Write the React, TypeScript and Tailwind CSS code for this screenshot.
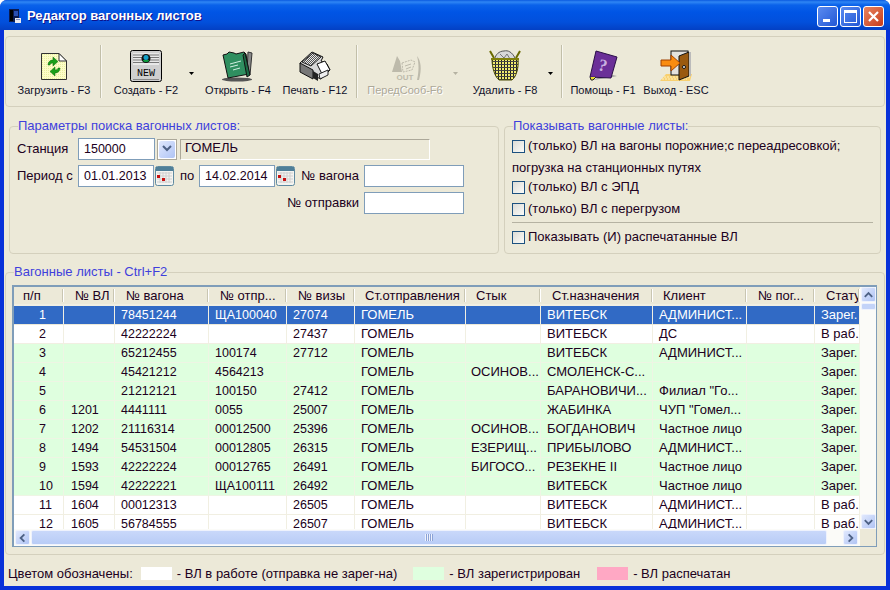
const colW = ['w-[50px]', 'w-[51px]', 'w-[94px]', 'w-[78px]', 'w-[68px]', 'w-[111px]', 'w-[75px]', 'w-[112px]', 'w-[94px]', 'w-[68px]', 'w-[45px]'];
const headers = ['п/п', '№ ВЛ', '№ вагона', '№ отпр...', '№ визы', 'Ст.отправления', 'Стык', 'Ст.назначения', 'Клиент', '№ пог...', 'Статус'];
const headerPad = ['pl-[9px]', 'pl-[11px]', 'pl-[11px]', 'pl-[11px]', 'pl-[11px]', 'pl-[10px]', 'pl-[10px]', 'pl-[11px]', 'pl-[10px]', 'pl-[11px]', 'pl-[11px]'];
const cellPad = ['pl-[25px]', 'pl-[7px]', 'pl-[6px]', 'pl-[6px]', 'pl-[6px]', 'pl-[6px]', 'pl-[5px]', 'pl-[6px]', 'pl-[6px]', 'pl-[6px]', 'pl-[6px]'];

const rows = [
  { kind: 'selected', cells: ['1', '', '78451244', 'ЩА100040', '27074', 'ГОМЕЛЬ', '', 'ВИТЕБСК', 'АДМИНИСТ...', '', 'Зарег.'] },
  { kind: 'white', cells: ['2', '', '42222224', '', '27437', 'ГОМЕЛЬ', '', 'ВИТЕБСК', 'ДС', '', 'В раб.'] },
  { kind: 'green', cells: ['3', '', '65212455', '100174', '27712', 'ГОМЕЛЬ', '', 'ВИТЕБСК', 'АДМИНИСТ...', '', 'Зарег.'] },
  { kind: 'green', cells: ['4', '', '45421212', '4564213', '', 'ГОМЕЛЬ', 'ОСИНОВ...', 'СМОЛЕНСК-С...', '', '', 'Зарег.'] },
  { kind: 'green', cells: ['5', '', '21212121', '100150', '27412', 'ГОМЕЛЬ', '', 'БАРАНОВИЧИ...', 'Филиал "Го...', '', 'Зарег.'] },
  { kind: 'green', cells: ['6', '1201', '4441111', '0055', '25007', 'ГОМЕЛЬ', '', 'ЖАБИНКА', 'ЧУП "Гомел...', '', 'Зарег.'] },
  { kind: 'green', cells: ['7', '1202', '21116314', '00012500', '25396', 'ГОМЕЛЬ', 'ОСИНОВ...', 'БОГДАНОВИЧ', 'Частное лицо', '', 'Зарег.'] },
  { kind: 'green', cells: ['8', '1494', '54531504', '00012805', '26315', 'ГОМЕЛЬ', 'ЕЗЕРИЩ...', 'ПРИБЫЛОВО', 'АДМИНИСТ...', '', 'Зарег.'] },
  { kind: 'green', cells: ['9', '1593', '42222224', '00012765', '26491', 'ГОМЕЛЬ', 'БИГОСО...', 'РЕЗЕКНЕ II', 'Частное лицо', '', 'Зарег.'] },
  { kind: 'green', cells: ['10', '1594', '42222221', 'ЩА100111', '26492', 'ГОМЕЛЬ', '', 'ВИТЕБСК', 'Частное лицо', '', 'Зарег.'] },
  { kind: 'white', cells: ['11', '1604', '00012313', '', '26505', 'ГОМЕЛЬ', '', 'ВИТЕБСК', 'АДМИНИСТ...', '', 'В раб.'] },
  { kind: 'white', cells: ['12', '1605', '56784555', '', '26507', 'ГОМЕЛЬ', '', 'ВИТЕБСК', 'АДМИНИСТ...', '', 'В раб.'] },
];

function AppIcon() {
  return (
    <svg width="16" height="16" viewBox="0 0 16 16">
      <rect x="2" y="1" width="10" height="13" fill="#0a1a50" />
      <rect x="3" y="2" width="3" height="11" fill="#000" />
      <rect x="7" y="3" width="4" height="5" fill="#2a4fb0" />
      <rect x="8" y="10" width="6" height="5" fill="#e8e8f0" />
      <rect x="9" y="11" width="4" height="1" fill="#8090c0" />
    </svg>
  );
}

function RefreshIcon() {
  return (
    <svg width="28" height="28" viewBox="0 0 28 28">
      <defs>
        <pattern id="dots" width="2" height="2" patternUnits="userSpaceOnUse">
          <rect width="2" height="2" fill="#fdfdc8" />
          <rect width="1" height="1" fill="#e8f0a0" />
        </pattern>
      </defs>
      <path d="M1.500 1.500H19L26.500 9V27.500H1.500Z" fill="url(#dots)" stroke="#333" />
      <path d="M19 1.500V9H26.500Z" fill="#fff" stroke="#333" />
      <path d="M8 13c0-3 2-5 5-5V5l5 4.500-5 4.500v-3c-2 0-3 1-3 2z" fill="#1aa01a" stroke="#0c6a0c" strokeWidth="0.500" />
      <path d="M20 16c0 3-2 5-5 5v3l-5-4.500 5-4.500v3c2 0 3-1 3-2z" fill="#1aa01a" stroke="#0c6a0c" strokeWidth="0.500" />
    </svg>
  );
}

function NewIcon() {
  return (
    <svg width="32" height="32" viewBox="0 0 32 32">
      <rect x="0.500" y="0.500" width="31" height="31" rx="2" fill="#cfcfcf" stroke="#000" />
      <rect x="3" y="3" width="26" height="12" fill="#e8e8e8" />
      <path d="M3 5h26M3 7.500h26M3 10h26M3 12.500h26" stroke="#777" />
      <circle cx="16" cy="8.500" r="4.500" fill="#111" />
      <circle cx="16" cy="7.500" r="2.500" fill="#12a0c8" />
      <path d="M13 10a3 2 0 0 0 6 0z" fill="#0c9a3c" />
      <text x="16" y="26" textAnchor="middle" fontSize="10" fontFamily="'Liberation Mono', monospace" fill="#000">NEW</text>
      <path d="M3 29.500h26" stroke="#888" />
    </svg>
  );
}

function OpenIcon() {
  return (
    <svg width="32" height="32" viewBox="0 0 32 32">
      <ellipse cx="15" cy="29.500" rx="15" ry="2" fill="#555" />
      <path d="M26 2l4 1-2 22-3-2z" fill="#888" stroke="#333" />
      <path d="M1 5l4-1 2-2 5 1 2 1 8-2 2 2 3 20-21 4z" fill="#2f8f60" stroke="#111" />
      <path d="M23 3l5 22-3 2-4-22z" fill="#1c6b45" stroke="#111" />
      <path d="M8 14l11-3M8 17l8-2M11 20l7-2" stroke="#cfeee0" />
    </svg>
  );
}

function PrinterIcon() {
  return (
    <svg width="32" height="32" viewBox="0 0 32 32">
      <defs>
        <pattern id="dither" width="2" height="2" patternUnits="userSpaceOnUse">
          <rect width="2" height="2" fill="#e8e8e8" />
          <rect width="1" height="1" fill="#555" />
          <rect x="1" y="1" width="1" height="1" fill="#555" />
        </pattern>
      </defs>
      <path d="M1 13L13 2l11 5-2 4 6 3 3 6-9 9-16-7z" fill="#d8d8d8" stroke="#111" />
      <path d="M3 12L14 3l8 4-10 9z" fill="url(#dither)" stroke="#222" />
      <path d="M1 13l13 7v9L1 22z" fill="#777" stroke="#111" />
      <path d="M18 14l8-3 5 9-8 4z" fill="#fff" stroke="#111" />
      <path d="M14 21l5 3v7l-5-3z" fill="#222" />
      <path d="M20 24l9-4v5l-8 4z" fill="#efefef" stroke="#222" />
    </svg>
  );
}

function OutIcon() {
  return (
    <svg width="34" height="32" viewBox="0 0 34 32">
      <path d="M4 22L9 6l3 5 2 11z" fill="#bdbaab" />
      <path d="M29 6c4 5 5 13 2 24l-2 0c2-9 2-16 0-24z" fill="#bdbaab" />
      <path d="M14 13l9-3 4 2-3 8-9 2z" fill="none" stroke="#bdbaab" strokeDasharray="2 1" />
      <path d="M17 16l6-2M18 19l5-2" stroke="#bdbaab" />
      <text x="17" y="30" textAnchor="middle" fontSize="8" fontWeight="700" fontFamily="'Liberation Sans', sans-serif" fill="#bdbaab">OUT</text>
    </svg>
  );
}

function BasketIcon() {
  return (
    <svg width="32" height="32" viewBox="0 0 32 32">
      <path d="M1 1l4 7M31 1l-4 7" stroke="#6b6b00" strokeWidth="2" />
      <path d="M6 9c0-4 4-8 9-8 4-1 8 1 11 7l-2 4H8z" fill="#d8d8d8" stroke="#555" />
      <path d="M11 4l4 4 3-4 3 5M8 8l5 2" stroke="#777" fill="none" />
      <defs>
        <pattern id="weave" width="3" height="3" patternUnits="userSpaceOnUse">
          <rect width="3" height="3" fill="#f2ec70" />
          <rect width="1" height="3" fill="#222" />
          <rect y="2" width="3" height="1" fill="#444" />
        </pattern>
      </defs>
      <path d="M3 9h26c1 9-2 18-6 21H10C6 27 3 18 3 9z" fill="url(#weave)" stroke="#4a4a00" />
      <path d="M2 9h28" stroke="#80800a" strokeWidth="2" />
    </svg>
  );
}

function HelpBookIcon() {
  return (
    <svg width="32" height="32" viewBox="0 0 32 32">
      <path d="M6 30l14-2 10-2-10-2z" fill="#999" />
      <path d="M9 1l21 6-6 21L3 27z" fill="#6b2f98" stroke="#2b0f48" />
      <path d="M3 27l1 3 2 0 3-3" fill="#e8d830" stroke="#222" />
      <text x="16" y="21" textAnchor="middle" fontSize="17" fontWeight="700" fontFamily="'Liberation Serif', serif" fill="#c9b0e0" transform="rotate(15 16 15)">?</text>
    </svg>
  );
}

function ExitIcon() {
  return (
    <svg width="32" height="32" viewBox="0 0 32 32">
      <path d="M0 31l6-7h26l-2 7z" fill="#f8d070" />
      <path d="M2 29h25M4 27h26" stroke="#fff2c0" strokeDasharray="2 1" />
      <rect x="11" y="1" width="17" height="24" fill="#e4e2de" stroke="#111" />
      <path d="M19 6l10-4v24l-10 4z" fill="#9a5a10" stroke="#111" />
      <circle cx="24" cy="17" r="1.500" fill="#fff" stroke="#111" />
      <path d="M1 10h10V5l9 8-9 8v-5H1z" fill="#fa8c10" stroke="#a04000" />
      <path d="M29 2h2v24h-2z" fill="#bbb" />
    </svg>
  );
}

function Caret({ disabled }: { disabled?: boolean }) {
  return (
    <svg width="5" height="3" viewBox="0 0 5 3" className="mt-[22px] shrink-0">
      <path d="M0 0h5L2.500 3z" fill={disabled ? '#b5b2a2' : '#000'} />
    </svg>
  );
}

function Sep() {
  return <div className="w-[2px] my-[8px] border-l border-[#c2bfa9] border-r border-r-[#f8f7f0] shrink-0" />;
}

function ToolButton({ icon, label, width, disabled }: { icon: React.ReactNode; label: string; width: string; disabled?: boolean }) {
  return (
    <div className={`${width} flex flex-col items-center shrink-0`}>
      <div className="h-[32px] mt-[13px] flex items-center justify-center">{icon}</div>
      <div className={`mt-[1px] text-[11px] leading-[14px] whitespace-nowrap ${disabled ? 'text-[#aca899] [text-shadow:1px_1px_0_#fff]' : 'text-[#10102a]'}`}>{label}</div>
    </div>
  );
}

function XpInput({ value, width }: { value?: string; width: string }) {
  return (
    <div className={`${width} h-[22px] bg-white border border-[#7f9db9] pl-[5px] text-[12.5px] leading-[20px] text-[#200020] shrink-0`}>{value}</div>
  );
}

function CalendarBtn() {
  return (
    <svg width="19" height="22" viewBox="0 0 19 22" className="shrink-0">
      <rect x="0.500" y="1.500" width="18" height="19" rx="2" fill="#f4f4f0" stroke="#5f8aa0" />
      <rect x="1" y="2" width="17" height="4" fill="#4f7f98" />
      <path d="M2 8h15M2 11h15M2 14h15M2 17h15M5 7v11M8 7v11M11 7v11M14 7v11" stroke="#d0d0d0" />
      <rect x="2" y="10" width="3" height="3" fill="#c81010" />
      <rect x="7" y="13" width="3" height="3" fill="#c81010" />
    </svg>
  );
}

function Check({ label }: { label: string }) {
  return (
    <div className="flex items-center h-[14px]">
      <div className="w-[13px] h-[13px] border border-[#1c5180] bg-gradient-to-br from-[#dcdcd7] to-[#fbfbf8] shrink-0" />
      <span className="ml-[3px] text-[13px] whitespace-nowrap text-[#200020]">{label}</span>
    </div>
  );
}

function ScrollBtn({ dir }: { dir: 'up' | 'down' | 'left' | 'right' }) {
  const d = { up: 'M3 9l4-4 4 4', down: 'M3 5l4 4 4-4', left: 'M9 3L5 7l4 4', right: 'M5 3l4 4-4 4' }[dir];
  return (
    <div className="w-[15px] h-[15px] rounded-[2px] border border-[#eef2fd] bg-gradient-to-br from-[#e0e8fd] to-[#b0c4f4] flex items-center justify-center shrink-0">
      <svg width="14" height="14" viewBox="0 0 14 14">
        <path d={d} fill="none" stroke="#4d6185" strokeWidth="2" />
      </svg>
    </div>
  );
}

export default function App() {
  return (
    <div className="w-[890px] h-[590px] overflow-hidden bg-white font-['Liberation_Sans',Arial,sans-serif]">
      <div className="w-full h-full flex flex-col rounded-t-[7px] overflow-hidden bg-[#0831d9]">
        <div className="h-[30px] shrink-0 flex items-center pt-[2px] bg-[linear-gradient(180deg,#0a5ae0_0,#2f86f4_2px,#0a62ea_5px,#0055e5_12px,#0250dc_22px,#0340c4_30px)] pl-[7px] pr-[6px]">
          <AppIcon />
          <span className="ml-[4px] text-[13px] font-bold text-white [text-shadow:1px_1px_0_#0f1089]">Редактор вагонных листов</span>
          <div className="ml-auto flex gap-[2px]">
            <div className="w-[21px] h-[21px] rounded-[3px] border border-white bg-gradient-to-br from-[#5b8bf0] to-[#2257d5] flex items-end pl-[5px] pb-[4px]">
              <div className="w-[7px] h-[3px] bg-white" />
            </div>
            <div className="w-[21px] h-[21px] rounded-[3px] border border-white bg-gradient-to-br from-[#5b8bf0] to-[#2257d5] flex items-center justify-center">
              <div className="w-[13px] h-[13px] border border-white border-t-[3px]" />
            </div>
            <div className="w-[21px] h-[21px] rounded-[3px] border border-white bg-gradient-to-br from-[#e8835f] to-[#c63a17] flex items-center justify-center">
              <svg width="13" height="13" viewBox="0 0 13 13">
                <path d="M2 2l9 9M11 2l-9 9" stroke="#fff" strokeWidth="2.200" />
              </svg>
            </div>
          </div>
        </div>

        <div className="flex-1 flex flex-col mx-[4px] mb-[4px] bg-[#ece9d8] min-h-0">
          <div className="h-[71px] mt-[6px] ml-[1px] mr-[1px] border border-[#d4d0bd] rounded-[4px] flex shrink-0 pl-[2px]">
            <ToolButton icon={<RefreshIcon />} label="Загрузить - F3" width="w-[92px]" />
            <Sep />
            <div className="w-[4px] shrink-0" />
            <ToolButton icon={<NewIcon />} label="Создать - F2" width="w-[80px]" />
            <div className="w-[10px] flex justify-center shrink-0"><div className="mt-[13px]"><Caret /></div></div>
            <ToolButton icon={<OpenIcon />} label="Открыть - F4" width="w-[84px]" />
            <ToolButton icon={<PrinterIcon />} label="Печать - F12" width="w-[70px]" />
            <div className="w-[6px] shrink-0" />
            <Sep />
            <ToolButton icon={<OutIcon />} label="ПередСооб-F6" width="w-[94px]" disabled />
            <div className="w-[6px] flex justify-center shrink-0"><div className="mt-[13px]"><Caret disabled /></div></div>
            <div className="w-[4px] shrink-0" />
            <ToolButton icon={<BasketIcon />} label="Удалить - F8" width="w-[86px]" />
            <div className="w-[5px] flex justify-center shrink-0"><div className="mt-[13px]"><Caret /></div></div>
            <div className="w-[8px] shrink-0" />
            <Sep />
            <ToolButton icon={<HelpBookIcon />} label="Помощь - F1" width="w-[80px]" />
            <ToolButton icon={<ExitIcon />} label="Выход - ESC" width="w-[66px]" />
          </div>

          <div className="flex mt-[12px] ml-[5px] gap-[5px] h-[135px] shrink-0">
            <fieldset className="w-[490px] border border-[#d4d0bd] rounded-[4px]">
              <legend className="ml-[8px] text-[13px] leading-[14px] text-[#3f3fdc]">Параметры поиска вагонных листов:</legend>
              <div className="pl-[7px] pt-[5px] flex flex-col gap-[5px] text-[13px] text-[#200020]">
                <div className="flex items-center h-[22px]">
                  <span className="w-[61px]">Станция</span>
                  <XpInput value="150000" width="w-[77px]" />
                  <div className="ml-[2px] w-[20px] h-[21px] border border-[#aca899] bg-white p-[1px]">
                    <div className="w-full h-full rounded-[2px] bg-gradient-to-br from-[#e0e8fd] to-[#b0c4f4] flex items-center justify-center">
                      <svg width="10" height="8" viewBox="0 0 10 8"><path d="M1 1l4 4 4-4" fill="none" stroke="#4d6185" strokeWidth="2" /></svg>
                    </div>
                  </div>
                  <div className="ml-[3px] w-[250px] h-[21px] border border-t-[#aca899] border-l-[#aca899] border-r-white border-b-white pl-[4px] leading-[15px]">ГОМЕЛЬ</div>
                </div>
                <div className="flex items-center h-[22px]">
                  <span className="w-[61px]">Период с</span>
                  <XpInput value="01.01.2013" width="w-[76px]" />
                  <div className="ml-[1px]"><CalendarBtn /></div>
                  <span className="ml-[6px] w-[19px]">по</span>
                  <XpInput value="14.02.2014" width="w-[76px]" />
                  <div className="ml-[1px]"><CalendarBtn /></div>
                  <span className="w-[64px] text-right whitespace-nowrap">№ вагона</span>
                  <div className="ml-[5px]"><XpInput width="w-[100px]" /></div>
                </div>
                <div className="flex items-center justify-end h-[22px] pr-[34px]">
                  <span>№ отправки</span>
                  <div className="ml-[5px]"><XpInput width="w-[100px]" /></div>
                </div>
              </div>
            </fieldset>

            <fieldset className="w-[377px] border border-[#d4d0bd] rounded-[4px]">
              <legend className="ml-[8px] text-[13px] leading-[14px] text-[#3f3fdc]">Показывать вагонные листы:</legend>
              <div className="px-[7px] pt-[6px] flex flex-col text-[13px] text-[#200020]">
                <Check label="(только) ВЛ на вагоны порожние;с переадресовкой;" />
                <div className="mt-[8px] h-[14px] leading-[14px]">погрузка на станционных путях</div>
                <div className="mt-[5px]"><Check label="(только) ВЛ с ЭПД" /></div>
                <div className="mt-[8px]"><Check label="(только) ВЛ с перегрузом" /></div>
                <div className="mt-[6px] h-[1px] bg-[#b5b2a2]" />
                <div className="mt-[7px]"><Check label="Показывать (И) распечатанные ВЛ" /></div>
              </div>
            </fieldset>
          </div>

          <fieldset className="mt-[11px] ml-[1px] mr-[1px] h-[290px] shrink-0 border border-[#d4d0bd] rounded-[4px]">
            <legend className="ml-[8px] text-[13px] leading-[14px] text-[#3f3fdc]">Вагонные листы - Ctrl+F2</legend>
            <div className="ml-[6px] mt-[6px] w-[865px] h-[262px] border-2 border-[#7f9db9] border-r-[1px] border-b-[1px] bg-white flex flex-col text-[13px]">
              <div className="flex flex-1 min-h-0">
                <div className="w-[846px] flex flex-col shrink-0 overflow-hidden">
                  <div className="h-[19px] flex shrink-0 bg-[#ece9d8] border-b-2 border-[#f1efe2] text-[#200020]">
                    {headers.map((h, i) => (
                      <div key={i} className={`${colW[i]} shrink-0 flex`}>
                        <div className={`${headerPad[i]} flex-1 overflow-hidden whitespace-nowrap leading-[18px]`}>{h}</div>
                        <div className="w-[2px] h-[13px] mt-[2px] border-l border-[#c9c6b2] border-r border-r-white shrink-0" />
                      </div>
                    ))}
                  </div>
                  {rows.map((r, ri) => (
                    <div key={ri} className={`h-[19px] flex shrink-0 border-b ${r.kind === 'selected' ? 'bg-[#316ac5] text-white border-[#ece9d8]' : r.kind === 'green' ? 'bg-[#dfffdf] text-[#200020] border-[#eef5e4]' : 'bg-white text-[#200020] border-[#f1efe2]'}`}>
                      {r.cells.map((c, i) => (
                        <div key={i} className={`${colW[i]} ${cellPad[i]} ${/\d/.test(c) ? 'text-[12.5px]' : ''} shrink-0 overflow-hidden whitespace-nowrap leading-[18px] border-r ${r.kind === 'green' ? 'border-[#eef5e4]' : 'border-[#f1efe2]'}`}>{c}</div>
                      ))}
                    </div>
                  ))}
                </div>
                <div className="flex-1 bg-[#fbfbf8] flex flex-col items-center">
                  <ScrollBtn dir="up" />
                  <div className="mt-[1px] w-[15px] h-[7px] rounded-[2px] border border-[#eef2fd] bg-[#c3d3f8]" />
                  <div className="mt-auto"><ScrollBtn dir="down" /></div>
                </div>
              </div>
              <div className="h-[17px] flex shrink-0 items-center">
                <div className="w-[846px] h-full flex items-center bg-[#fbfbf8] pl-[1px]">
                  <ScrollBtn dir="left" />
                  <div className="ml-[1px] w-[796px] h-[15px] rounded-[2px] border border-[#eef2fd] bg-gradient-to-b from-[#c9d8fa] to-[#b8ccf6] flex items-center justify-center">
                    <div className="w-[8px] h-[7px] bg-[repeating-linear-gradient(90deg,#eef2fd_0_1px,#8ca3d6_1px_2px)]" />
                  </div>
                  <div className="ml-[16px]"><ScrollBtn dir="right" /></div>
                </div>
                <div className="flex-1 h-full bg-[#ece9d8]" />
              </div>
            </div>
          </fieldset>

          <div className="flex-1 flex items-center pl-[4px] pt-[6px] text-[13px] text-[#200020] whitespace-nowrap">
            <span>Цветом обозначены:</span>
            <div className="ml-[8px] w-[31px] h-[13px] bg-white shrink-0" />
            <span className="ml-[5px]">- ВЛ в работе (отправка не зарег-на)</span>
            <div className="ml-[16px] w-[31px] h-[13px] bg-[#dfffdf] shrink-0" />
            <span className="ml-[5px]">- ВЛ зарегистрирован</span>
            <div className="ml-[17px] w-[31px] h-[13px] bg-[#ffa8c4] shrink-0" />
            <span className="ml-[5px]">- ВЛ распечатан</span>
          </div>
        </div>
      </div>
    </div>
  );
}
